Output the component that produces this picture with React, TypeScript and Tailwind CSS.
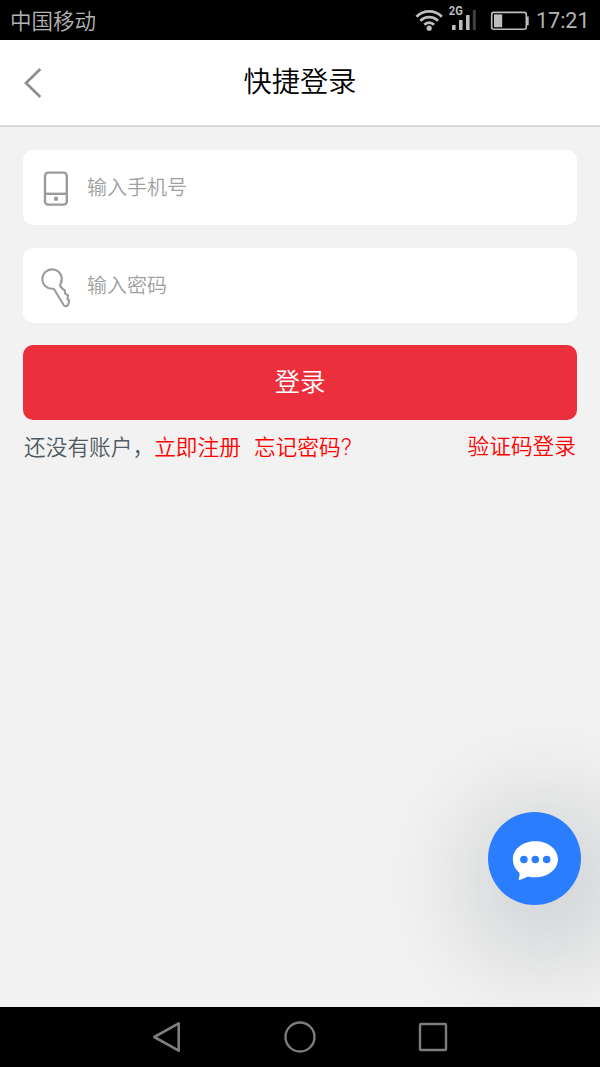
import type { ReactNode } from 'react';

function StatusBar() {
  return (
    <div className="flex h-10 shrink-0 items-center justify-between bg-black pl-2.5 pr-3 text-[#b4b4b4]">
      <span className="pt-[3px] text-[21.5px] leading-[37px] font-[350]">中国移动</span>
      <div className="flex items-center">
        <svg className="h-10 w-[122px]" viewBox="0 0 122 40" fill="none">
          {/* wifi */}
          <g stroke="#bdbdbd" strokeWidth="2.7">
            <path d="M2.5 16.8a17.6 17.6 0 0 1 25.4 0" />
            <path d="M6.4 20.9a12.2 12.2 0 0 1 17.6 0" />
            <path d="M10.3 24.7a6.8 6.8 0 0 1 9.8 0" />
          </g>
          <circle cx="15.2" cy="28.2" r="2.6" fill="#bdbdbd" />
          {/* signal */}
          <text
            x="34.8"
            y="15.2"
            fill="#bdbdbd"
            fontSize="12"
            fontWeight="700"
            fontFamily="Roboto, sans-serif"
            textLength="14"
            lengthAdjust="spacingAndGlyphs"
          >
            2G
          </text>
          <g fill="#bdbdbd">
            <rect x="38" y="25" width="3.6" height="5" rx="0.5" />
            <rect x="45" y="20" width="3.6" height="10" rx="0.5" />
            <rect x="52" y="15" width="3.6" height="15" rx="0.5" />
            <rect x="58.8" y="10" width="3" height="20" rx="0.5" fill="#404040" />
          </g>
          {/* battery */}
          <rect x="77.7" y="12.4" width="34.6" height="16.8" rx="2" stroke="#bdbdbd" strokeWidth="1.6" />
          <rect x="80" y="14.4" width="8.2" height="12.8" fill="#bdbdbd" />
          <path d="M112.8 16.5h1.900v8.800h-1.900z" fill="#bdbdbd" />
        </svg>
        <span className="w-[52px] pt-0.5 text-[21.5px] leading-[38px]">17:21</span>
      </div>
    </div>
  );
}

function Field({ icon, type, placeholder }: { icon: ReactNode; type: string; placeholder: string }) {
  return (
    <label className="flex h-[75px] items-center rounded-[10px] bg-white">
      <span className="ml-4 mr-3 h-11 w-9">{icon}</span>
      <input
        type={type}
        placeholder={placeholder}
        className="h-full flex-1 bg-transparent text-[20px] font-[350] outline-none placeholder:text-[#a0a0a0]"
      />
    </label>
  );
}

export default function App() {
  return (
    <div className="relative flex h-[1067px] w-[600px] flex-col overflow-hidden bg-[#f2f2f2] font-['Roboto','Noto_Sans_CJK_SC',sans-serif]">
      <StatusBar />

      <header className="grid h-[87px] shrink-0 grid-cols-[60px_1fr_60px] items-center border-b-2 border-[#d9d9d9] bg-white">
        <button type="button" aria-label="返回">
          <svg className="ml-5 h-[34px] w-6" viewBox="0 0 24 34" fill="none" stroke="#8f8f8f" strokeWidth="2.7">
            <path d="M20.3 3 6 17l14.3 14" />
          </svg>
        </button>
        <h1 className="pt-px text-center text-[28.2px] leading-10 font-[350] text-black">快捷登录</h1>
      </header>

      <main className="flex flex-1 flex-col px-[23px] pt-[23px]">
        <div className="flex flex-col gap-[23px]">
          <Field
            type="tel"
            placeholder="输入手机号"
            icon={
              <svg viewBox="0 0 36 44" fill="none" stroke="#9b9b9b" strokeWidth="2.4">
                <rect x="6" y="6.6" width="21.8" height="32" rx="3.2" />
                <path d="M6 27.8h22" />
                <circle cx="17" cy="32.8" r="2.2" fill="#9b9b9b" stroke="none" />
              </svg>
            }
          />
          <Field
            type="password"
            placeholder="输入密码"
            icon={
              <svg viewBox="0 0 36 44" fill="none" stroke="#9b9b9b" strokeWidth="2.1" strokeLinejoin="round">
                <path d="M14.400 24.700A9.700 9.700 0 1 1 21.700 19.600C20.800 21.300 21.200 22.700 22.400 23.600L26 26.600 25.900 29.100 29.200 31.600 28.400 34.700 30 36.500 29.900 38.700 28.500 41.600C27.200 42.500 25.300 42.200 24.600 41L15.900 26.500Q15.300 25.300 14.400 24.700Z" />
              </svg>
            }
          />
        </div>

        <button
          type="button"
          className="mt-[22px] h-[75px] rounded-[10px] bg-[#eb2f3d] text-[25.5px] font-[350] text-white"
        >
          登录
        </button>

        <div className="mt-3 flex items-start justify-between pl-px text-[21.7px] leading-8 font-[350] text-[#ff0000]">
          <p className="flex items-baseline">
            <span className="text-[#4f5a61]">还没有账户，</span>
            <a>立即注册</a>
            <a className="ml-[13px]">
              忘记密码<span className="text-[24px] leading-none">?</span>
            </a>
          </p>
          <a className="pr-px leading-[30px]">验证码登录</a>
        </div>
      </main>

      {/* floating chat button */}
      <button
        type="button"
        aria-label="在线客服"
        className="absolute top-[812px] left-[488px] h-[93px] w-[93px] rounded-full bg-[#2b7dff] shadow-[12px_22px_110px_24px_rgba(10,20,30,0.2)]"
      >
        <svg viewBox="0 0 93 93">
          <path
            d="M47.300 29.200c12.600 0 22.600 7.800 22.600 18s-10 18.100-22.600 18.100c-2.600 0-5-.3-7.300-.9-2.800 1.300-6 2.800-9.600 3.700.9-2 1.300-4.600 1-7.300-4.100-3.300-6.500-8.100-6.500-13.600 0-10.200 9.900-18 22.400-18z"
            fill="#fff"
          />
          <g fill="#2b7dff">
            <circle cx="35.9" cy="47.5" r="3.8" />
            <circle cx="47.3" cy="47.5" r="3.8" />
            <circle cx="58.7" cy="47.5" r="3.8" />
          </g>
        </svg>
      </button>

      {/* system navigation, stays above the button's shadow */}
      <nav className="relative flex h-[60px] shrink-0 items-center justify-center gap-[97px] bg-black">
        <svg className="h-9 w-9" viewBox="0 0 36 36" fill="none" stroke="#7d7d7d" strokeWidth="2.6" strokeLinejoin="round">
          <path d="M5.3 18 29.700 4.300v27.400z" />
        </svg>
        <svg className="h-9 w-9" viewBox="0 0 36 36" fill="none" stroke="#7d7d7d" strokeWidth="2.4">
          <circle cx="18" cy="18" r="14.5" />
        </svg>
        <svg className="h-9 w-9" viewBox="0 0 36 36" fill="none" stroke="#7d7d7d" strokeWidth="2.4">
          <rect x="5" y="5" width="26" height="26" rx="1" />
        </svg>
      </nav>
    </div>
  );
}
